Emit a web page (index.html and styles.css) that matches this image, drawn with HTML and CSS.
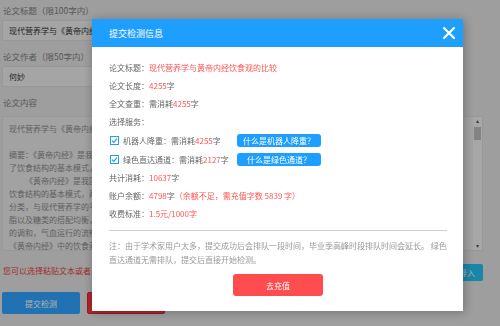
FILE: index.html
```html
<!DOCTYPE html>
<html lang="zh-CN">
<head>
    <meta charset="UTF-8">
    <meta name="viewport" content="width=device-width, initial-scale=1.0">
    <title>提交检测</title>
    <link rel="stylesheet" href="styles.css">
</head>
<body>
<!-- 提交表单 -->
<div class="page">
    <div class="label">论文标题（限100字内）</div>
    <div class="input input-title">现代营养学与《黄帝内经》</div>
    <div class="label">论文作者（限50字内）</div>
    <div class="input">何妙</div>
    <div class="label">论文内容</div>
    <div class="textarea">
        <div class="ta-text">
            <div>现代营养学与《黄帝内经》</div>
            <div>&nbsp;</div>
            <div>摘要：《黄帝内经》是我国</div>
            <div>了饮食结构的基本模式，提出</div>
            <div class="indent">《黄帝内经》是我国古</div>
            <div>饮食结构的基本模式，两者</div>
            <div>分类，与现代营养学的平衡</div>
            <div>脂以及糖类的搭配均衡，注</div>
            <div>的调和，气血运行的流畅，</div>
            <div>《黄帝内经》中的饮食养生</div>
        </div>
        <div class="scrollbar">
            <span class="arrow">&#9652;</span>
            <span class="thumb"></span>
            <span class="arrow arrow-down">&#9662;</span>
        </div>
    </div>
    <div class="hint-row">
        <span class="hint">您可以选择粘贴文本或者上传</span>
        <button class="btn-import">上传文档导入</button>
    </div>
    <div class="actions">
        <button class="btn btn-blue">提交检测</button>
        <button class="btn btn-red">清空内容</button>
    </div>
</div>

<!-- 遮罩和弹窗 -->
<div class="shade"></div>
<div class="dialog">
    <div class="dialog-head">
        <span class="dialog-title">提交检测信息</span>
        <svg class="close" width="12" height="12" viewBox="0 0 12 12">
            <path d="M1 1 L11 11 M11 1 L1 11" stroke="#fff" stroke-width="2.2" stroke-linecap="round"/>
        </svg>
    </div>
    <div class="dialog-body">
        <div class="row">论文标题：<span class="red">现代营养学与黄帝内经饮食观的比较</span></div>
        <div class="row">论文长度：<span class="red">4255</span>字</div>
        <div class="row">全文查重：需消耗<span class="red">4255</span>字</div>
        <div class="row">选择服务：</div>
        <div class="row check-row first">
            <span class="check-label">
                <svg class="checkbox" width="9" height="9" viewBox="0 0 9 9">
                    <rect x="0.5" y="0.5" width="8" height="8" fill="#fff" stroke="#1e9fff"/>
                    <path d="M2 4.6 L3.8 6.3 L7 2.6" fill="none" stroke="#1e9fff" stroke-width="1.2"/>
                </svg>
                机器人降重：需消耗<span class="red">4255</span>字
            </span>
            <span class="btn-help">什么是机器人降重？</span>
        </div>
        <div class="row check-row">
            <span class="check-label">
                <svg class="checkbox" width="9" height="9" viewBox="0 0 9 9">
                    <rect x="0.5" y="0.5" width="8" height="8" fill="#fff" stroke="#1e9fff"/>
                    <path d="M2 4.6 L3.8 6.3 L7 2.6" fill="none" stroke="#1e9fff" stroke-width="1.2"/>
                </svg>
                绿色直达通道：需消耗<span class="red">2127</span>字
            </span>
            <span class="btn-help">什么是绿色通道？</span>
        </div>
        <div class="row short">共计消耗：<span class="red">10637</span>字</div>
        <div class="row">账户余额：<span class="red">4798</span>字<span class="red">（余额不足，需充值字数 5839 字）</span></div>
        <div class="row tall">收费标准：<span class="red">1.5元/1000字</span></div>
        <hr class="line">
        <p class="note">注：由于学术家用户太多，提交成功后会排队一段时间，毕业季高峰时段排队时间会延长。 绿色直达通道无需排队，提交后直接开始检测。</p>
        <div class="dialog-foot">
            <button class="btn-pay">去充值</button>
        </div>
    </div>
</div>
</body>
</html>
```

FILE: styles.css
```css
/* 基本样式 */
body {
    margin: 0;
    background-color: #e2e2e2;
    font-family: "Noto Sans CJK SC", "Liberation Sans", sans-serif;
    font-size: 8px;
    color: #333;
    overflow: hidden;
}
button {
    font-family: inherit;
    font-size: 8px;
    border: none;
    cursor: pointer;
}

/* 表单 */
.page {
    padding: 3px 0 0 2px;
}
.label {
    height: 14px;
    line-height: 14px;
    padding-left: 1px;
    color: #808080;
    font-size: 8.5px;
}
.input + .label {
    margin-top: 8px;
}
.input {
    box-sizing: border-box;
    width: 440px;
    height: 21px;
    line-height: 19px;
    margin-top: 3px;
    padding: 0 6px;
    border: 1px solid #dadada;
    background-color: #ececec;
    white-space: nowrap;
    overflow: hidden;
}
.textarea {
    box-sizing: border-box;
    display: flex;
    width: 481px;
    height: 135px;
    margin-top: 7px;
    border: 1px solid #dadada;
    background-color: #e8e8e8;
}
.ta-text {
    flex: 1;
    padding: 4.5px 6px;
    line-height: 13px;
    color: #8a8a8a;
    white-space: nowrap;
    overflow: hidden;
}
.ta-text .indent {
    padding-left: 16px;
}
.scrollbar {
    display: flex;
    flex-direction: column;
    align-items: center;
    width: 9px;
    background-color: #f0f0f0;
    color: #555;
    font-size: 6px;
    line-height: 8px;
}
.scrollbar .thumb {
    width: 7px;
    height: 13px;
    margin-top: 2px;
    background-color: #bdbdbd;
}
.scrollbar .arrow-down {
    margin-top: auto;
}
.hint-row {
    display: flex;
    align-items: center;
    justify-content: space-between;
    width: 481px;
    margin-top: 13px;
}
.hint {
    padding-left: 1px;
    margin-top: -5px;
    color: #e83e3e;
}
.btn-import {
    height: 17px;
    padding: 0 8px;
    background-color: #24c1f3;
    color: #fff;
    border-radius: 2px;
}
.actions {
    display: flex;
    gap: 7px;
    margin-top: 11px;
}
.btn {
    width: 78px;
    height: 22px;
    color: #fff;
    border-radius: 2px;
}
.btn-blue {
    background-color: #2ea4ff;
}
.btn-red {
    background-color: #fb363d;
    border: 1px solid #e0252c;
}

/* 遮罩 */
.shade {
    position: fixed;
    inset: 0;
    background-color: rgba(0, 0, 0, 0.3);
}

/* 弹窗 */
.dialog {
    position: fixed;
    left: 92px;
    top: 19px;
    width: 371px;
    height: 292px;
    background-color: #fff;
    box-shadow: 1px 1px 10px rgba(0, 0, 0, 0.3);
}
.dialog-head {
    display: flex;
    align-items: center;
    justify-content: space-between;
    height: 28px;
    padding: 0 8px 0 17px;
    background-color: #1e9fff;
}
.dialog-title {
    color: #fff;
    font-size: 9px;
}
.dialog-body {
    padding: 11px 16px 0 17px;
    color: #666;
}
.row {
    display: flex;
    align-items: center;
    height: 18px;
    white-space: nowrap;
}
.row.short {
    height: 17px;
}
.row.tall {
    height: 19px;
}
.check-row {
    height: 19px;
}
.check-row.first {
    height: 20px;
}
.check-label {
    display: flex;
    align-items: center;
    width: 128px;
}
.checkbox {
    margin: 0 4px 0 1px;
}
.btn-help {
    width: 84px;
    height: 13px;
    line-height: 13px;
    text-align: center;
    background-color: #1e9fff;
    color: #fff;
    border-radius: 3px;
}
.red {
    color: #ff5555;
}
.line {
    margin: 7px 0 0;
    border: none;
    border-top: 1px solid #cfcfcf;
}
.note {
    margin: 8px 0 0;
    line-height: 13.5px;
    color: #999;
}
.dialog-foot {
    display: flex;
    justify-content: center;
    margin-top: 8px;
}
.btn-pay {
    width: 90px;
    height: 22px;
    background-color: #ff4d4f;
    color: #fff;
    border-radius: 3px;
}
```
